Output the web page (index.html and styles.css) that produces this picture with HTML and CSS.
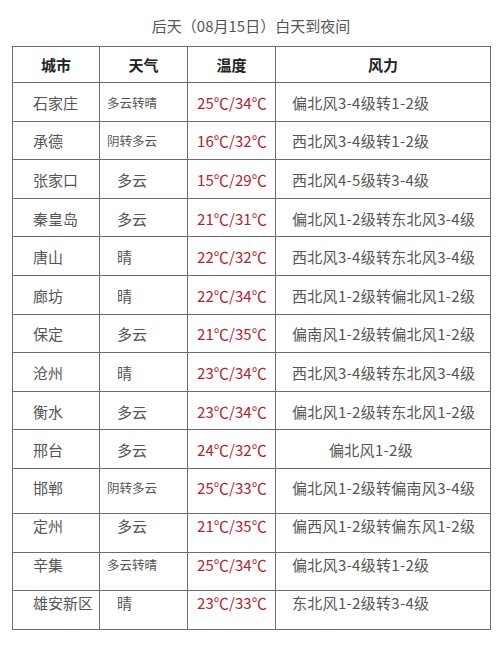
FILE: index.html
```html
<!DOCTYPE html>
<html lang="zh">
<head>
<meta charset="utf-8">
<link rel="stylesheet" href="styles.css">
</head>
<body>
<div class="title">后天（08月15日）白天到夜间</div>
<table class="wx">
  <colgroup>
    <col class="c-city"><col class="c-wx"><col class="c-temp"><col class="c-wind">
  </colgroup>
  <thead>
    <tr><th>城市</th><th>天气</th><th>温度</th><th>风力</th></tr>
  </thead>
  <tbody>
    <tr><td class="city">石家庄</td><td class="wx2 small">多云转晴</td><td class="temp">25℃/34℃</td><td class="wind">偏北风3-4级转1-2级</td></tr>
    <tr><td class="city">承德</td><td class="wx2 small">阴转多云</td><td class="temp">16℃/32℃</td><td class="wind">西北风3-4级转1-2级</td></tr>
    <tr><td class="city">张家口</td><td class="wx2">多云</td><td class="temp">15℃/29℃</td><td class="wind">西北风4-5级转3-4级</td></tr>
    <tr><td class="city">秦皇岛</td><td class="wx2">多云</td><td class="temp">21℃/31℃</td><td class="wind">偏北风1-2级转东北风3-4级</td></tr>
    <tr><td class="city">唐山</td><td class="wx2">晴</td><td class="temp">22℃/32℃</td><td class="wind">西北风3-4级转东北风3-4级</td></tr>
    <tr><td class="city">廊坊</td><td class="wx2">晴</td><td class="temp">22℃/34℃</td><td class="wind">西北风1-2级转偏北风1-2级</td></tr>
    <tr><td class="city">保定</td><td class="wx2">多云</td><td class="temp">21℃/35℃</td><td class="wind">偏南风1-2级转偏北风1-2级</td></tr>
    <tr><td class="city">沧州</td><td class="wx2">晴</td><td class="temp">23℃/34℃</td><td class="wind">西北风3-4级转东北风3-4级</td></tr>
    <tr><td class="city">衡水</td><td class="wx2">多云</td><td class="temp">23℃/34℃</td><td class="wind">偏北风1-2级转东北风1-2级</td></tr>
    <tr><td class="city">邢台</td><td class="wx2">多云</td><td class="temp">24℃/32℃</td><td class="wind indent">偏北风1-2级</td></tr>
    <tr class="tall"><td class="city">邯郸</td><td class="wx2 small">阴转多云</td><td class="temp">25℃/33℃</td><td class="wind">偏北风1-2级转偏南风3-4级</td></tr>
    <tr class="top"><td class="city">定州</td><td class="wx2">多云</td><td class="temp">21℃/35℃</td><td class="wind">偏西风1-2级转偏东风1-2级</td></tr>
    <tr class="top"><td class="city">辛集</td><td class="wx2 small">多云转晴</td><td class="temp">25℃/34℃</td><td class="wind">偏北风3-4级转1-2级</td></tr>
    <tr class="top"><td class="city">雄安新区</td><td class="wx2">晴</td><td class="temp">23℃/33℃</td><td class="wind">东北风1-2级转3-4级</td></tr>
  </tbody>
</table>
</body>
</html>
```

FILE: styles.css
```css
html, body {
  margin: 0;
  padding: 0;
  background: #ffffff;
}
body {
  font-family: "Noto Sans CJK SC", "Noto Sans", sans-serif;
  color: #555555;
  width: 500px;
}
.title {
  padding-top: 16px;
  height: 20px;
  line-height: 20px;
  font-size: 15px;
  text-align: center;
  color: #555555;
  margin-bottom: 10px;
  padding-left: 2px;
}
.wx {
  border-collapse: collapse;
  margin-left: 12px;
  width: 478px;
  table-layout: fixed;
  font-size: 15px;
}
.c-city { width: 87px; }
.c-wx { width: 88px; }
.c-temp { width: 88px; }
.c-wind { width: 215px; }
.wx th, .wx td {
  border: 1px solid #6c6c6c;
  padding: 0;
  line-height: 20px;
  white-space: nowrap;
  overflow: hidden;
}
.wx th {
  height: 35px;
  font-weight: bold;
  color: #222222;
  text-align: center;
  font-size: 15px;
}
.wx tbody tr { height: 38.6px; }
.wx td {
  vertical-align: middle;
  padding-top: 2px;
  text-align: left;
}
.city { padding-left: 20px !important; }
.wx2 { padding-left: 17px !important; }
.wx2.small { padding-left: 7px !important; font-size: 12.5px; }
.temp { padding-left: 9px !important; color: #b3232b; letter-spacing: 0.1px; }
.wind { padding-left: 16px !important; letter-spacing: 0.3px; }
.wind.indent { padding-left: 53px !important; }
.wx tr.tall { height: 45px; }
.wx tr.tall td { vertical-align: top; padding-top: 9px; }
.wx tr.top { height: 38.7px; }
.wx tr.top td { vertical-align: top; padding-top: 2px; }
```
